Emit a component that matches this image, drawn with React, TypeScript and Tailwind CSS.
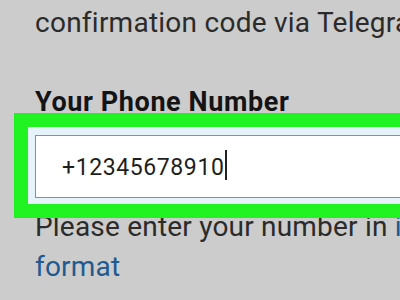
import React from "react";

export default function App() {
  return (
    <div
      className="w-[400px] h-[300px] overflow-hidden bg-[#cccccc] pl-[35px]"
      style={{ fontFamily: "Roboto, 'Noto Sans', sans-serif" }}
    >
      <div className="mt-[3px] text-[28px] tracking-[0.25px] leading-[40px] text-[#2b2b2b] whitespace-nowrap">
        confirmation code via Telegram
      </div>
      <div className="mt-[39px] text-[27px] tracking-[0.6px] leading-[40px] font-bold text-[#141414] whitespace-nowrap">
        Your Phone Number
      </div>
      <div className="relative mt-[13px] w-[420px]">
        <div className="absolute top-[-22px] left-[-21px] bottom-[-20px] right-[-40px] z-10 border-[14px] border-[#20f321] bg-[#e6f3fb]" />
        <div className="relative z-20 h-[63px] border border-[#6b98bd] bg-white flex items-start pl-[26px]">
          <span className="mt-[18px] text-[23px] tracking-[0.6px] leading-[28px] text-[#1e1e1e] whitespace-nowrap">
            +12345678910
          </span>
          <span className="mt-[14px] ml-[1px] w-[2px] h-[30px] bg-[#222]" />
        </div>
      </div>
      <div className="mt-[9px] text-[28px] tracking-[0.2px] leading-[40px] text-[#2b2b2b] whitespace-nowrap">
        Please enter your number in{" "}
        <span className="text-[#1f5a90]">international</span>
      </div>
      <div className="text-[28px] tracking-[0.2px] leading-[40px] text-[#1f5a90] whitespace-nowrap">
        format
      </div>
    </div>
  );
}
